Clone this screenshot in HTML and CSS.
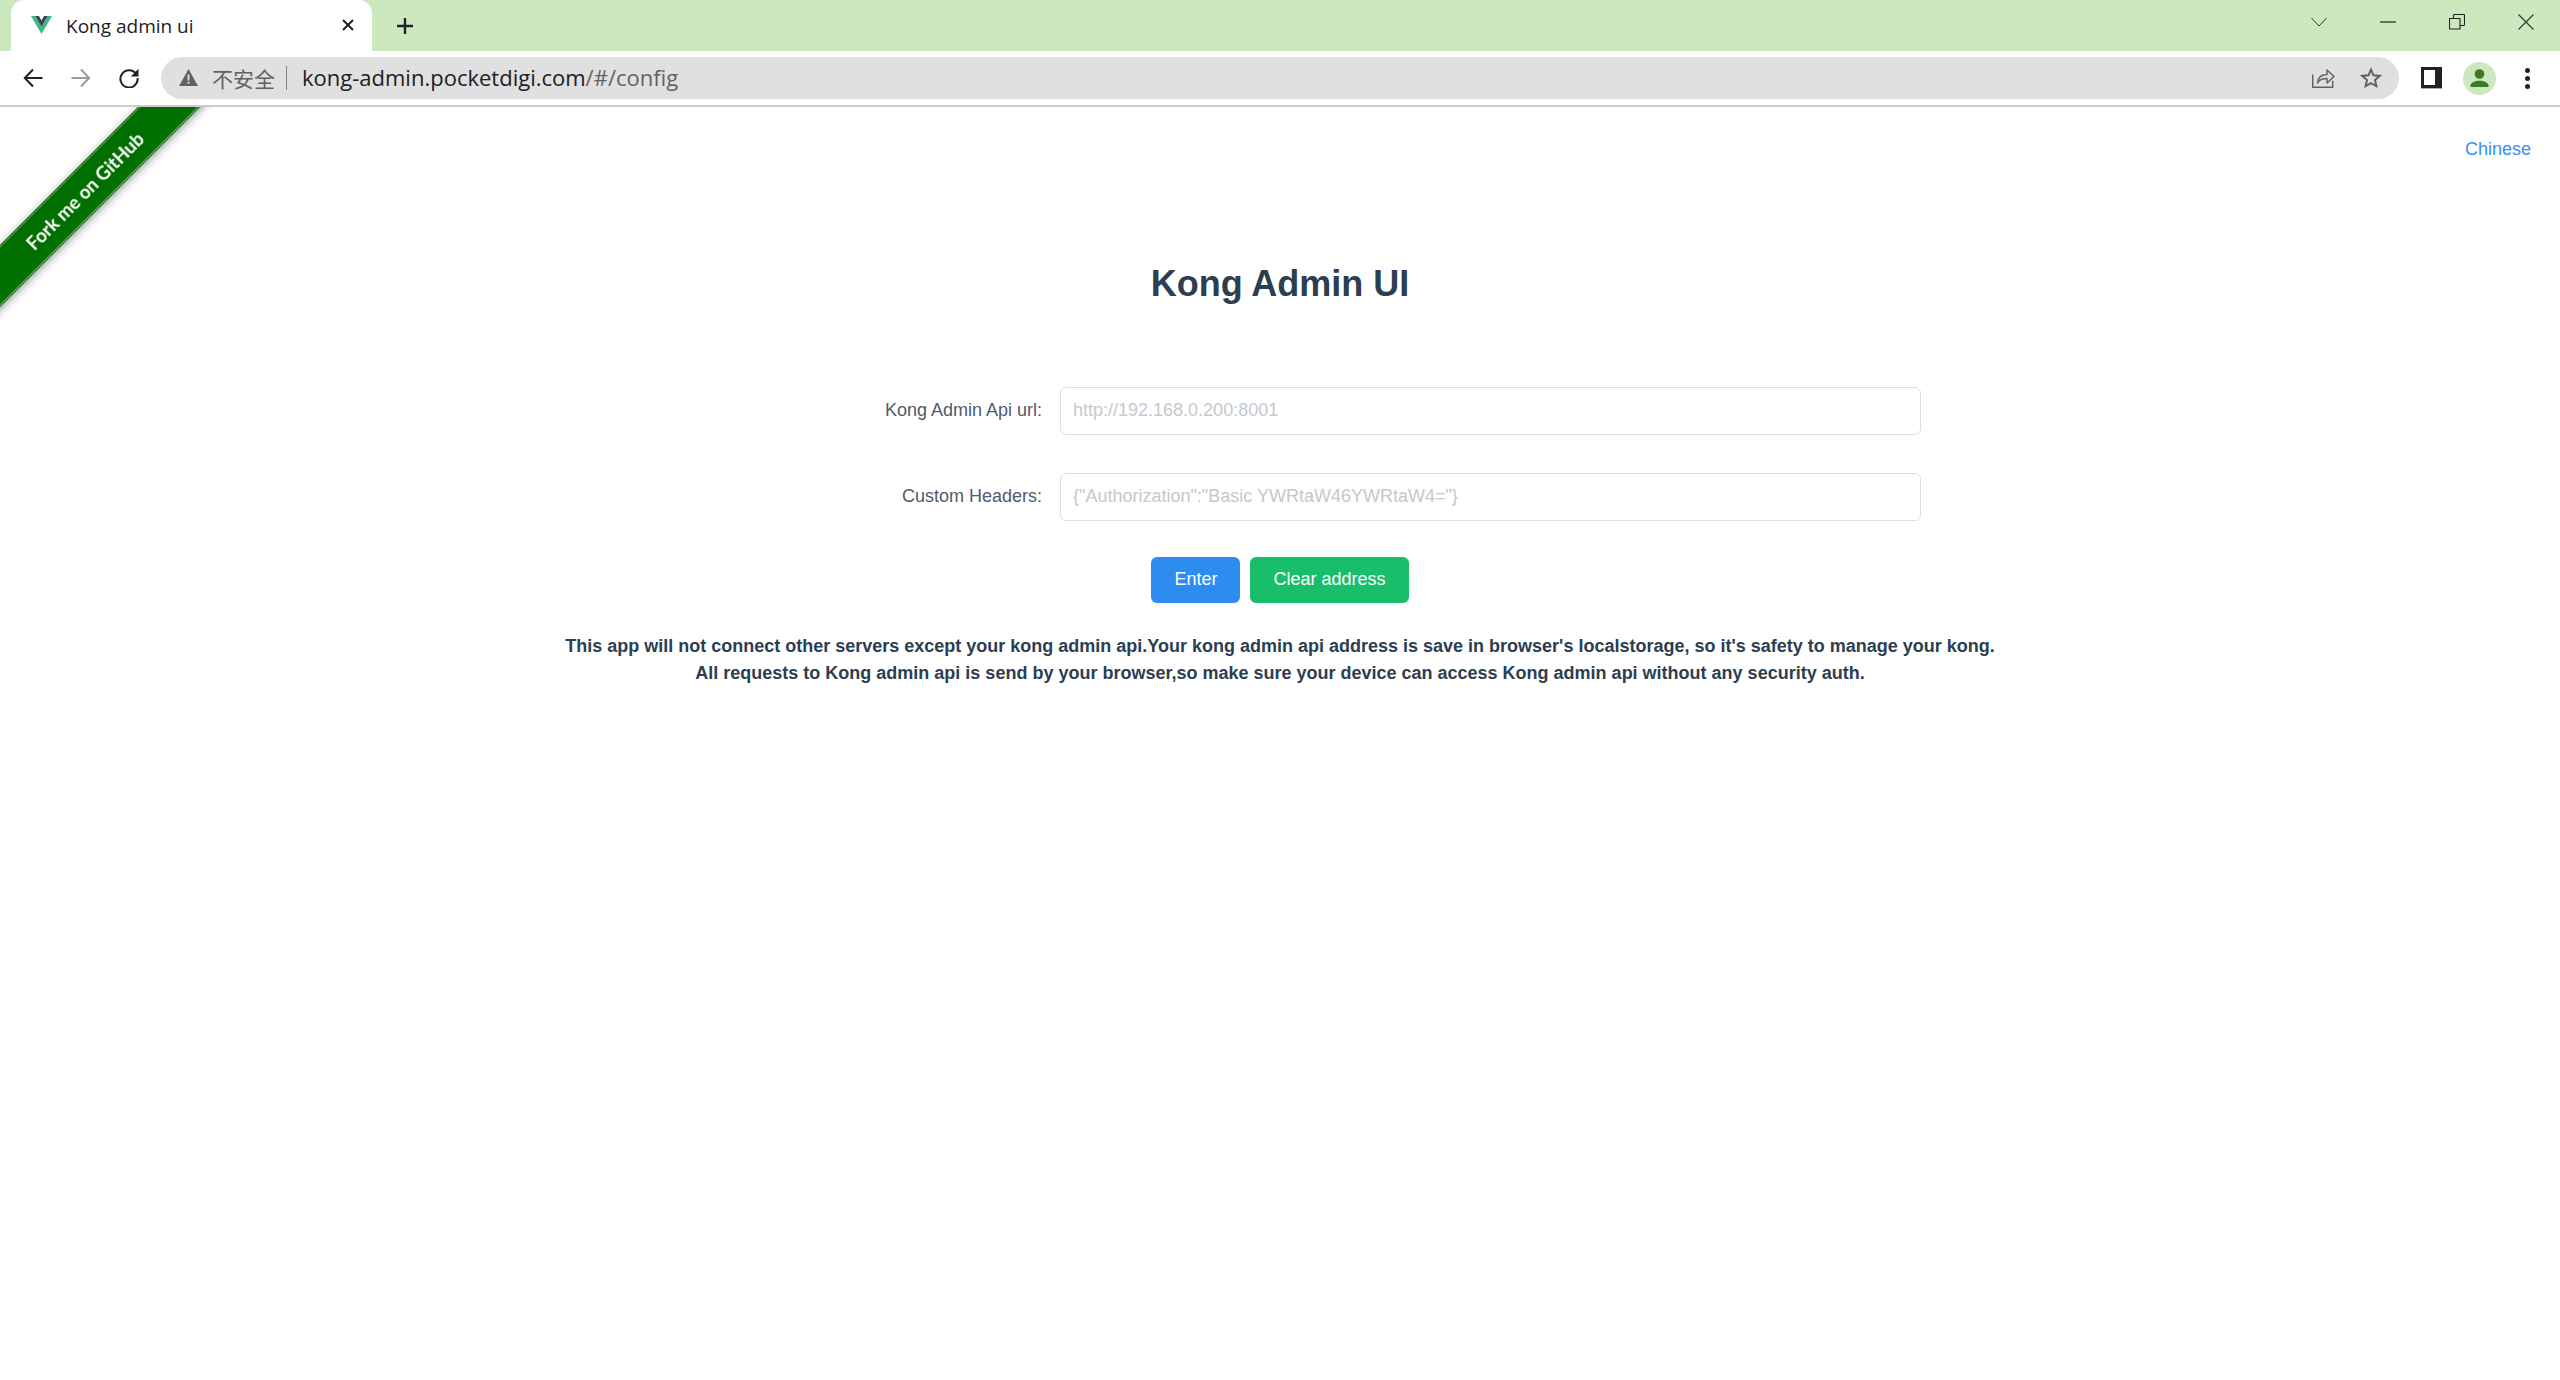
FILE: index.html
```html
<!DOCTYPE html>
<html lang="en">
<head>
<meta charset="utf-8">
<title>Kong admin ui</title>
<link rel="stylesheet" href="styles.css">
</head>
<body>
<div class="browser">
  <div class="tabstrip">
    <div class="tab">
      <svg class="favicon" viewBox="0 0 21 18"><path fill="#41b883" d="M0 0h4.2l6.3 10.8L16.800 0H21L10.500 18z"/><path fill="#35495e" d="M4.200 0h3.700l2.600 4.500L13.100 0h3.700l-6.300 10.800z"/></svg>
      <span class="tab-title">Kong admin ui</span>
      <svg class="tab-close" viewBox="0 0 12 12"><path d="M1 1l10 10M11 1L1 11" stroke="#202124" stroke-width="2" fill="none"/></svg>
    </div>
    <svg class="new-tab" viewBox="0 0 18 18"><path d="M9 1v16M1 9h16" stroke="#202124" stroke-width="2.400" fill="none"/></svg>
    <div class="window-controls">
      <svg class="win-icon" viewBox="0 0 16 16"><path d="M.5 4l7.500 8 7.500-8" stroke="#333" stroke-width="1" fill="none"/></svg>
      <svg class="win-icon" viewBox="0 0 16 16"><path d="M0 8h16" stroke="#222" stroke-width="1.200" fill="none"/></svg>
      <svg class="win-icon" viewBox="0 0 16 16"><path d="M.5 4.500h10.500v10.500H.5zM4.500 4.500V1.500a1 1 0 0 1 1-1h9a1 1 0 0 1 1 1v9a1 1 0 0 1-1 1h-3.500" stroke="#222" stroke-width="1.100" fill="none"/></svg>
      <svg class="win-icon" viewBox="0 0 16 16"><path d="M.5.500l15 15M15.500.500l-15 15" stroke="#333" stroke-width="1.100" fill="none"/></svg>
    </div>
  </div>
  <div class="toolbar">
    <svg class="nav-icon" viewBox="0 0 20 20"><path d="M19.500 10H2M10 1.500L1.800 10l8.200 8.500" stroke="#202124" stroke-width="2" fill="none"/></svg>
    <svg class="nav-icon" viewBox="0 0 20 20"><path d="M.500 10H18M10 1.500l8.200 8.500-8.200 8.500" stroke="#9a9b9d" stroke-width="2" fill="none"/></svg>
    <svg class="nav-icon" viewBox="0 0 20 20"><path d="M17.300 6.300A8.600 8.600 0 1 0 18.600 10" stroke="#202124" stroke-width="2" fill="none"/><path d="M19.500 .8v7.700h-7.700z" fill="#202124"/></svg>
    <div class="omnibox">
      <svg class="warn" viewBox="0 0 19 17"><path fill="#5f6368" d="M9.500 0L19 17H0z"/><path fill="#e0e0e0" d="M8.600 5.500h1.800v6H8.600zM8.600 12.800h1.800v1.900H8.600z"/></svg>
      <span class="insecure">不安全</span>
      <span class="sep"></span>
      <span class="url"><span class="host">kong-admin.pocketdigi.com</span><span class="path">/#/config</span></span>
      <span class="spacer"></span>
      <svg class="omni-icon share" viewBox="0 0 23 21"><path d="M.7 7.500v12.800h20v-6.500" stroke="#5f6368" stroke-width="1.500" fill="none"/><path d="M5.500 16c.5-5.500 4-8.500 9.500-8.500V3l7 6.500-7 6.500v-4.500c-4 0-7.500 1-9.500 4.500z" stroke="#5f6368" stroke-width="1.500" fill="none" stroke-linejoin="round"/></svg>
      <svg class="omni-icon star" viewBox="0 0 22 21"><path d="M11 2.600l2.500 5.700 6.200.6-4.700 4.100 1.400 6.100L11 16.100l-5.400 3 1.400-6.100-4.700-4.100 6.200-.6z" stroke="#5f6368" stroke-width="2" fill="none"/></svg>
    </div>
    <svg class="panel" viewBox="0 0 21 22"><path fill="#202124" d="M0 0h21v21H0z"/><path fill="#fff" d="M3 3h11v15H3z"/><path fill="#aaa" d="M0 21h21v1H0z"/></svg>
    <div class="avatar"><svg viewBox="0 0 33 33"><circle cx="16.500" cy="12" r="4.800" fill="#3b7a27"/><path d="M7.500 25v-1.500c0-3 5-4.800 9-4.800s9 1.800 9 4.800V25z" fill="#3b7a27"/></svg></div>
    <div class="menu"><i></i><i></i><i></i></div>
  </div>
</div>
<main class="page">
  <a class="ribbon"><span>Fork me on GitHub</span></a>
  <div class="lang"><a class="lang-link">Chinese</a></div>
  <h1 class="title">Kong Admin UI</h1>
  <form class="form">
    <label class="label">Kong Admin Api url:</label>
    <input class="input" placeholder="http://192.168.0.200:8001">
    <label class="label">Custom Headers:</label>
    <input class="input" placeholder="{&quot;Authorization&quot;:&quot;Basic YWRtaW46YWRtaW4=&quot;}">
  </form>
  <div class="actions">
    <button class="btn btn-blue" type="button">Enter</button>
    <button class="btn btn-green" type="button">Clear address</button>
  </div>
  <p class="notice">This app will not connect other servers except your kong admin api.Your kong admin api address is save in browser's localstorage, so it's safety to manage your kong.<br>All requests to Kong admin api is send by your browser,so make sure your device can access Kong admin api without any security auth.</p>
</main>
</body>
</html>
```
FILE: styles.css
```css
* { box-sizing: border-box; }
html, body { margin: 0; height: 100%; }
body {
  display: flex;
  flex-direction: column;
  overflow: hidden;
  background: #fff;
  font-family: "Liberation Sans", Arial, sans-serif;
  color: #2c3e50;
}
svg { display: block; flex: none; }

.browser { flex: none; height: 107px; }
.tabstrip {
  height: 51px;
  background: #cbe8bf;
  display: flex;
  align-items: flex-start;
  padding-left: 11px;
}
.tab {
  position: relative;
  width: 361px;
  height: 51px;
  background: #fff;
  border-radius: 13px 13px 0 0;
  display: flex;
  align-items: center;
  padding: 0 18px 0 20px;
}
.favicon { width: 21px; height: 18px; margin-top: -1px; }
.tab-title {
  flex: 1;
  margin-left: 14px;
  font: 400 19px "Open Sans", sans-serif;
  color: #202124;
  white-space: nowrap;
}
.tab-close { width: 12px; height: 12px; margin-top: -1px; }
.new-tab { width: 18px; height: 18px; margin: 17px 0 0 24px; }
.window-controls {
  margin-left: auto;
  display: flex;
  gap: 53px;
  padding: 14px 26px 0 0;
}
.win-icon { width: 16px; height: 16px; }

.toolbar {
  height: 56px;
  background: #fff;
  border-bottom: 2px solid #ccc;
  display: flex;
  align-items: center;
  padding: 0 0 0 23px;
}
.nav-icon { width: 20px; height: 20px; margin-right: 28px; margin-top: -1px; }
.nav-icon:nth-child(3) { margin-right: 22px; }
.omnibox {
  width: 2238px;
  height: 42px;
  margin-top: -1px;
  background: #e0e0e0;
  border-radius: 21px;
  display: flex;
  align-items: center;
  padding: 0 17px 0 18px;
}
.warn { width: 19px; height: 17px; }
.insecure {
  margin-left: 14px;
  font: 400 21px "Noto Sans CJK SC", sans-serif;
  color: #5f6368;
}
.sep { width: 1px; height: 24px; background: #80868b; margin: 0 15px 0 11px; }
.url { font: 400 22px "Open Sans", sans-serif; white-space: nowrap; padding-bottom: 2px; }
.host { color: #202124; }
.path { color: #5f6368; }
.spacer { flex: 1; }
.omni-icon { height: 21px; }
.share { width: 23px; }
.star { width: 22px; margin-left: 25px; }
.panel { width: 21px; height: 22px; margin-left: 22px; }
.avatar {
  width: 33px;
  height: 33px;
  margin-left: 21px;
  border-radius: 50%;
  background: #cbe8bf;
}
.menu { display: flex; flex-direction: column; gap: 3px; margin-left: 29px; }
.menu i { display: block; width: 5px; height: 5px; border-radius: 50%; background: #202124; }

.page { position: relative; flex: 1; overflow: hidden; }
.ribbon {
  position: absolute;
  left: -75px;
  top: 62px;
  width: 320px;
  height: 44px;
  transform: rotate(-45deg);
  background: #006f00;
  box-shadow: 0 2px 8px rgba(0, 0, 0, .4);
  display: flex;
  align-items: center;
  justify-content: center;
  color: #fff;
  font: 700 18.500px Lato, sans-serif;
  filter: blur(.4px);
}
.ribbon::before {
  content: "";
  position: absolute;
  inset: 1px 0;
  border-top: 1px solid rgba(255, 255, 255, .3);
  border-bottom: 1px solid rgba(255, 255, 255, .4);
}
.lang { display: flex; justify-content: flex-end; padding: 32px 29px 0 0; }
.lang-link { font-size: 18px; line-height: 20px; color: #3a8ef5; }
.title {
  margin: 104px 0 0;
  text-align: center;
  font-size: 36px;
  line-height: 42px;
  font-weight: 700;
}
.form {
  display: grid;
  grid-template-columns: 404px 861px;
  column-gap: 18px;
  row-gap: 38px;
  align-items: center;
  width: 1284px;
  margin: 82px auto 0;
}
.label { text-align: right; font-size: 18px; color: #515a6e; padding-bottom: 2px; }
.input {
  height: 48px;
  width: 100%;
  padding: 0 12px 1px;
  border: 1.500px solid #dcdee2;
  border-radius: 6px;
  font: 18px "Liberation Sans", Arial, sans-serif;
  outline: none;
}
.input::placeholder { color: #c5c8ce; opacity: 1; }
.actions { display: flex; justify-content: center; gap: 10px; margin-top: 36px; }
.btn {
  height: 46px;
  padding: 0 23px 2px;
  border: 0;
  border-radius: 6px;
  color: #fff;
  font: 18px "Liberation Sans", Arial, sans-serif;
}
.btn-blue { background: #2d8cf0; }
.btn-green { background: #19be6b; }
.notice {
  margin: 30px 0 0;
  text-align: center;
  font-size: 18px;
  line-height: 26.500px;
  font-weight: 700;
}
```
